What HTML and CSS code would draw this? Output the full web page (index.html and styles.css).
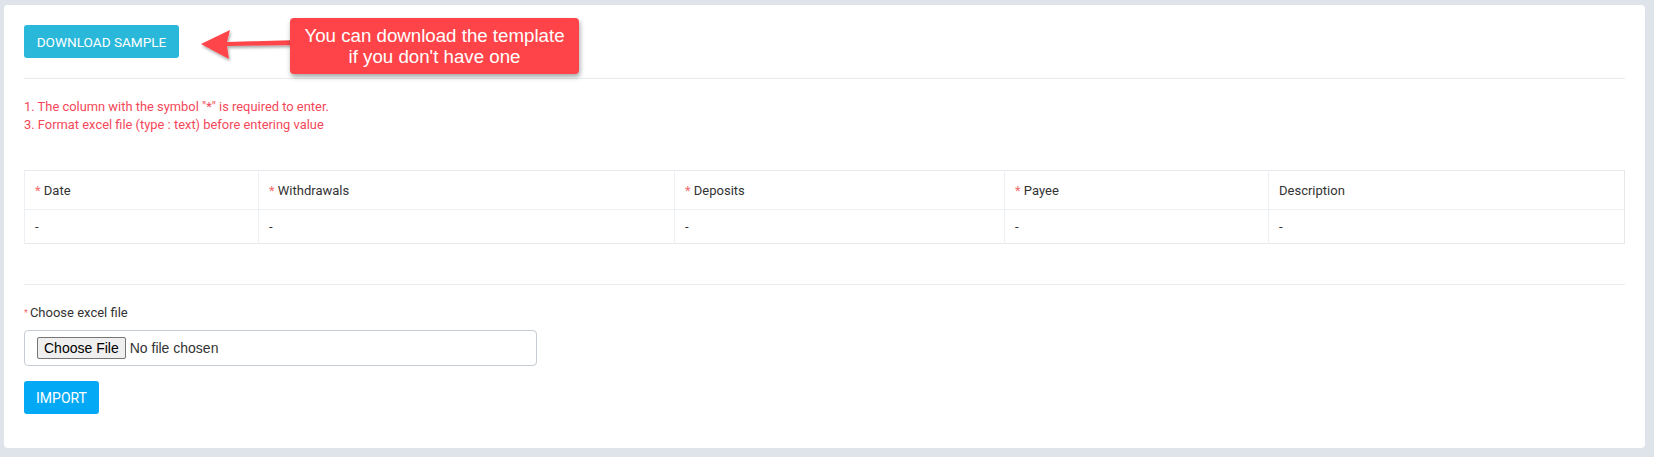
FILE: index.html
```html
<!DOCTYPE html>
<html>
<head>
<meta charset="utf-8">
<link rel="stylesheet" href="styles.css">
</head>
<body>
<div class="card">
  <div class="top">
    <button class="btn btn-sample">DOWNLOAD SAMPLE</button>
    <svg class="arrow" width="100" height="40" viewBox="0 0 100 40">
      <defs>
        <filter id="sh" x="-20%" y="-40%" width="140%" height="180%">
          <feDropShadow dx="1" dy="2" stdDeviation="1.5" flood-color="#000" flood-opacity="0.35"/>
        </filter>
      </defs>
      <path d="M0 22 L29 8 L26 20 L98 18 L98 23 L26 24 L28 37 Z" fill="#fe4449" filter="url(#sh)"/>
    </svg>
    <div class="callout">You can download the template<br>if you don't have one</div>
  </div>
  <hr class="divider">
  <div class="notes">
    <div>1. The column with the symbol "*" is required to enter.</div>
    <div>3. Format excel file (type : text) before entering value</div>
  </div>
  <table class="grid">
    <thead>
      <tr>
        <th class="c1"><span class="req">*</span> Date</th>
        <th class="c2"><span class="req">*</span> Withdrawals</th>
        <th class="c3"><span class="req">*</span> Deposits</th>
        <th class="c4"><span class="req">*</span> Payee</th>
        <th class="c5">Description</th>
      </tr>
    </thead>
    <tbody>
      <tr><td>-</td><td>-</td><td>-</td><td>-</td><td>-</td></tr>
    </tbody>
  </table>
  <hr class="divider divider2">
  <label class="field-label"><span class="req-small">*</span>Choose excel file</label>
  <div class="file-box">
    <span class="file-btn">Choose File</span><span class="file-name">No file chosen</span>
  </div>
  <button class="btn btn-import">IMPORT</button>
</div>
</body>
</html>
```
FILE: styles.css
```css
html, body {
  margin: 0;
  padding: 0;
}
body {
  background: #dfe3ea;
  padding: 5px 9px 9px 4px;
  font-family: Roboto, "Liberation Sans", sans-serif;
  color: #333;
}
.card {
  background: #fff;
  border-radius: 4px;
  padding: 20px 20px 34px 20px;
  display: flex;
  flex-direction: column;
  align-items: flex-start;
}
.top {
  position: relative;
  width: 100%;
  height: 33px;
}
.btn {
  border: none;
  color: #fff;
  font-family: Roboto, "Liberation Sans", sans-serif;
  font-size: 14px;
  border-radius: 3px;
  height: 33px;
  padding: 0;
  cursor: pointer;
}
.btn-sample {
  background: #29b8da;
  width: 155px;
  font-size: 13.6px;
}
.btn-import {
  background: #03a9f4;
  width: 75px;
  margin-top: 15px;
}
.arrow {
  position: absolute;
  left: 177px;
  top: -3px;
}
.callout {
  position: absolute;
  left: 266px;
  top: -7px;
  width: 289px;
  height: 56px;
  background: #fe4449;
  border-radius: 4px;
  box-shadow: 1px 3px 5px rgba(0,0,0,0.35);
  color: #fff;
  font-family: "Liberation Sans", Arial, sans-serif;
  font-size: 18.7px;
  line-height: 21px;
  text-align: center;
  display: flex;
  align-items: center;
  justify-content: center;
}
.divider {
  width: 100%;
  border: none;
  border-top: 1px solid #e9ebee;
  margin: 20px 0 0 0;
}
.divider2 {
  margin-top: 40px;
}
.notes {
  margin-top: 19px;
  color: #f5475a;
  font-size: 12.9px;
  line-height: 18px;
}
.grid {
  margin-top: 36px;
  width: 100%;
  border-collapse: collapse;
  font-size: 13px;
  color: #333;
  border: 1px solid #e6e8eb;
}
.grid th, .grid td {
  text-align: left;
  font-weight: normal;
  padding: 0 10px;
  border-left: 1px solid #eceff3;
}
.grid th {
  height: 38px;
  border-bottom: 1px solid #eef2f7;
}
.grid td {
  height: 33px;
}
.c1 { width: 213px; }
.c2 { width: 395px; }
.c3 { width: 309px; }
.c4 { width: 243px; }
.req {
  color: #f56c6c;
}
.field-label {
  margin-top: 19px;
  font-size: 13px;
  line-height: 18px;
  color: #333;
  display: flex;
  align-items: center;
}
.req-small {
  color: #f56c6c;
  font-size: 9px;
  margin-right: 2px;
}
.file-box {
  box-sizing: border-box;
  margin-top: 8px;
  width: 513px;
  height: 36px;
  border: 1px solid #c5ccd6;
  border-radius: 4px;
  display: flex;
  align-items: center;
  padding-left: 12px;
  font-family: "Liberation Sans", Arial, sans-serif;
  font-size: 14px;
}
.file-btn {
  background: #efefef;
  border: 1px solid #767676;
  border-radius: 2px;
  height: 20px;
  padding: 0 6px;
  display: flex;
  align-items: center;
  color: #000;
  font-size: 14px;
}
.file-name {
  margin-left: 4px;
  color: #333;
}
```
